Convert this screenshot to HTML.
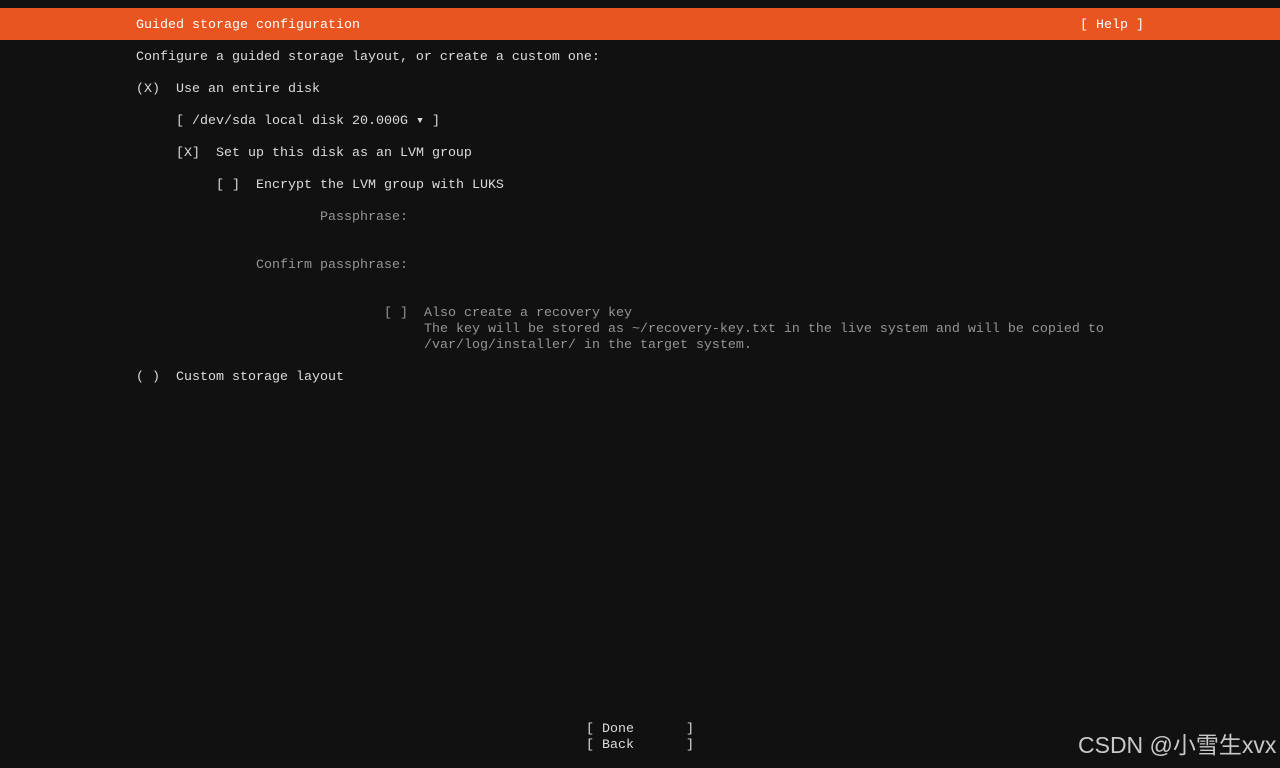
<!DOCTYPE html>
<html><head><meta charset="utf-8"><style>
html,body{margin:0;padding:0;}
body{width:1280px;height:768px;background:#111111;position:relative;overflow:hidden;font-family:"Liberation Mono","DejaVu Sans Mono",monospace;font-size:13.33px;color:#dcdcdc;}
.bar{position:absolute;left:0;top:8px;width:1280px;height:32px;background:#E95420;}
.t{position:absolute;line-height:16px;white-space:pre;}
.g{color:#959595;}
.wm{position:absolute;left:1078px;top:731px;font-family:"Liberation Sans","Noto Sans CJK SC",sans-serif;font-size:23px;color:#c8c8c8;white-space:nowrap;line-height:28px;}
</style></head><body>
<div class="bar"></div>
<div class="t" style="left:136px;top:18px;color:#fff">Guided storage configuration</div>
<div class="t" style="left:1080px;top:18px;color:#fff">[ Help ]</div>
<div class="t" style="left:136px;top:50px">Configure a guided storage layout, or create a custom one:</div>
<div class="t" style="left:136px;top:82px">(X)  Use an entire disk</div>
<div class="t" style="left:176px;top:114px">[ /dev/sda local disk 20.000G ▾ ]</div>
<div class="t" style="left:176px;top:146px">[X]  Set up this disk as an LVM group</div>
<div class="t" style="left:216px;top:178px">[ ]  Encrypt the LVM group with LUKS</div>
<div class="t g" style="left:320px;top:210px">Passphrase:</div>
<div class="t g" style="left:256px;top:258px">Confirm passphrase:</div>
<div class="t g" style="left:384px;top:306px">[ ]  Also create a recovery key</div>
<div class="t g" style="left:424px;top:322px">The key will be stored as ~/recovery-key.txt in the live system and will be copied to</div>
<div class="t g" style="left:424px;top:338px">/var/log/installer/ in the target system.</div>
<div class="t" style="left:136px;top:370px">( )  Custom storage layout</div>
<div class="t" style="left:586px;top:722px">[ Done</div>
<div class="t" style="left:686px;top:722px">]</div>
<div class="t" style="left:586px;top:738px">[ Back</div>
<div class="t" style="left:686px;top:738px">]</div>
<div class="wm">CSDN @小雪生xvx</div>
</body></html>
